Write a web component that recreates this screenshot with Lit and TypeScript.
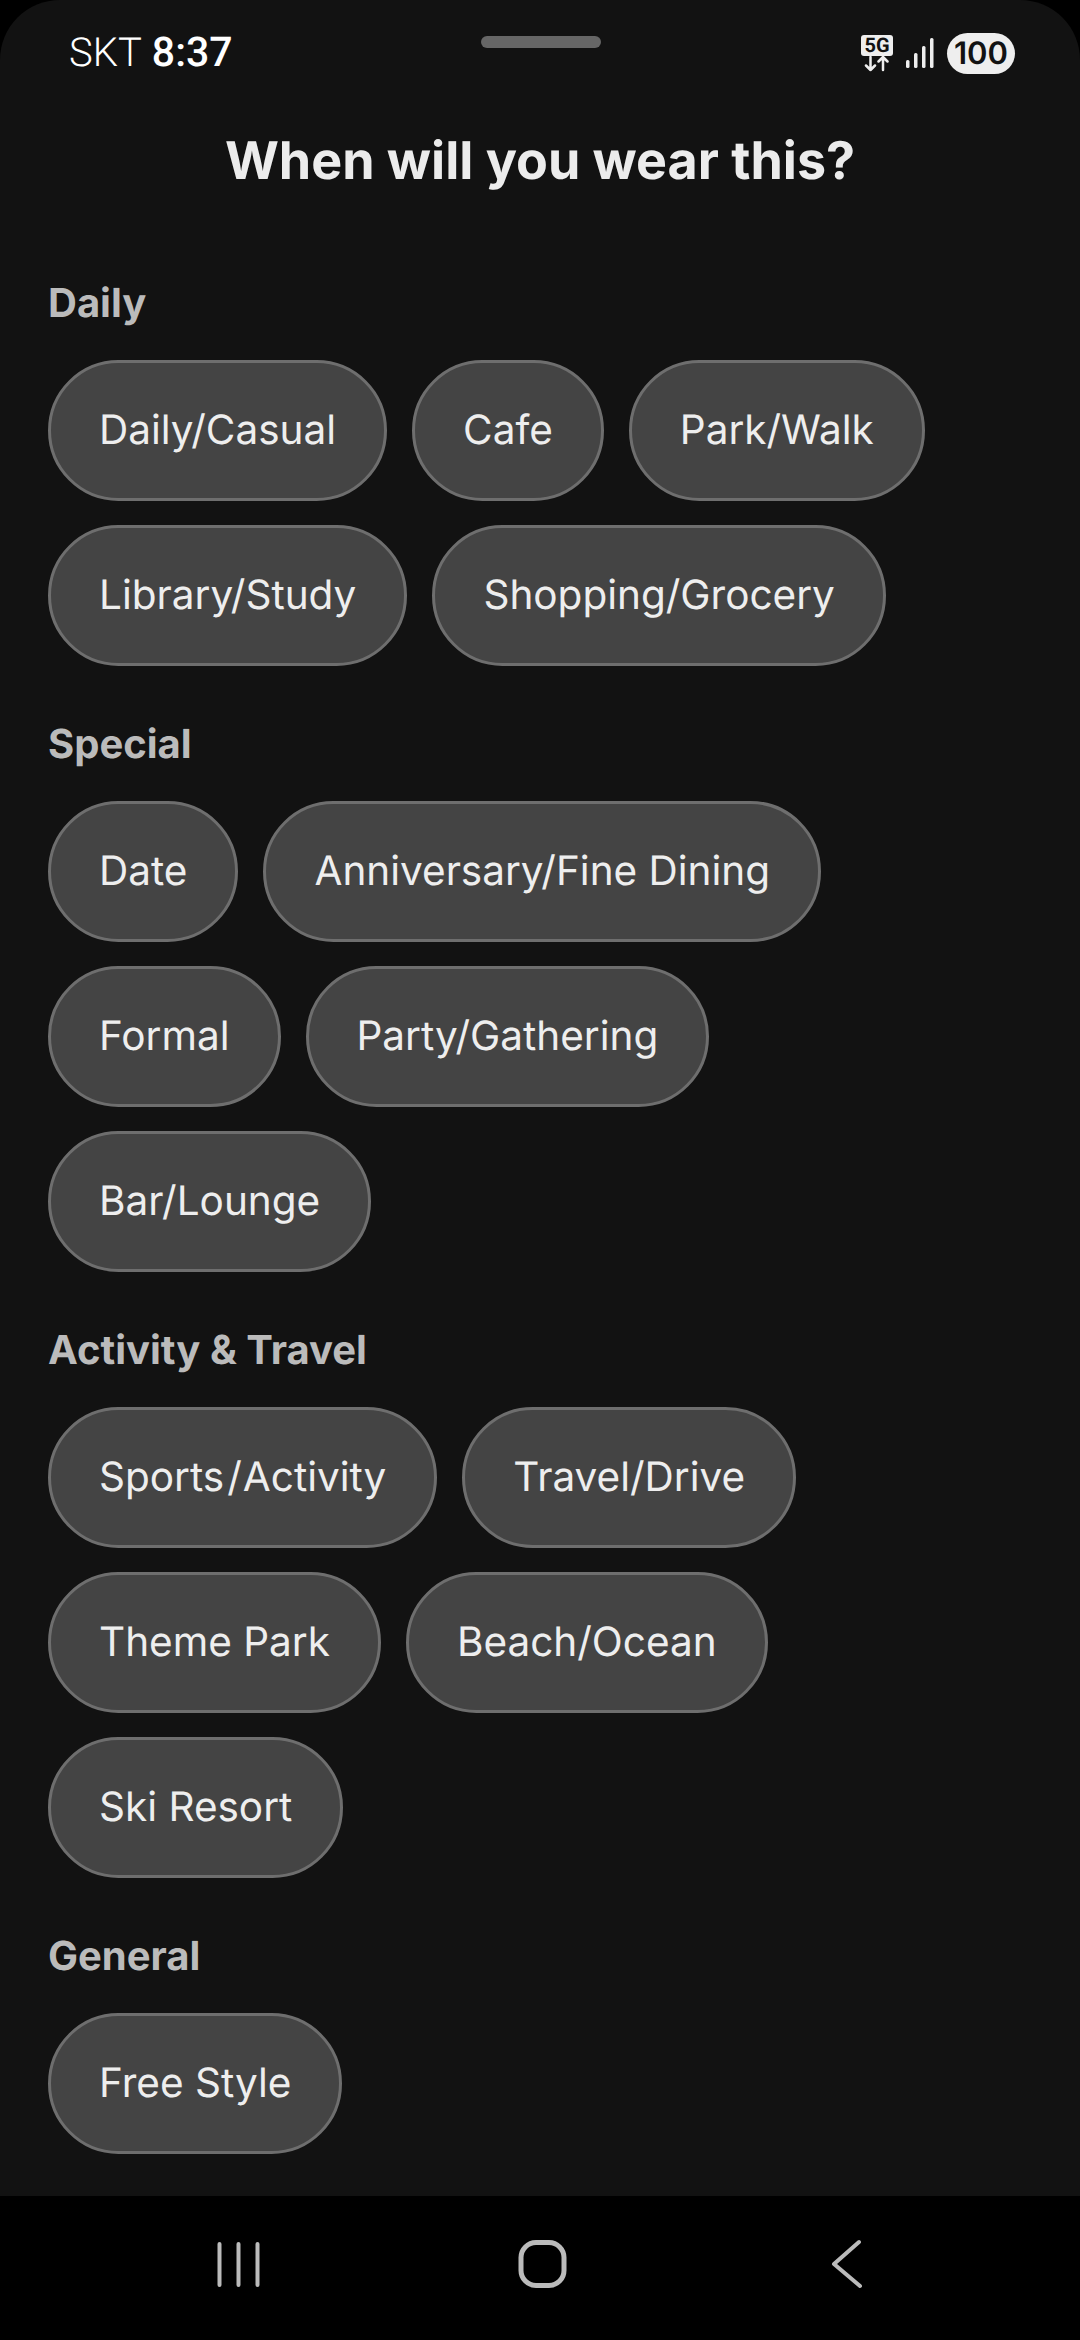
import { css, html, LitElement } from 'lit'
import { customElement } from 'lit/decorators.js'

interface Section {
  title: string
  chips: string[]
}

const sections: Section[] = [
  {
    title: 'Daily',
    chips: ['Daily/Casual', 'Cafe', 'Park/Walk', 'Library/Study', 'Shopping/Grocery'],
  },
  {
    title: 'Special',
    chips: ['Date', 'Anniversary/Fine Dining', 'Formal', 'Party/Gathering', 'Bar/Lounge'],
  },
  {
    title: 'Activity & Travel',
    chips: ['Sports/Activity', 'Travel/Drive', 'Theme Park', 'Beach/Ocean', 'Ski Resort'],
  },
  {
    title: 'General',
    chips: ['Free Style'],
  },
]

@customElement('app-root')
export class AppRoot extends LitElement {
  static styles = css`
    :host {
      display: flex;
      flex-direction: column;
      width: 1080px;
      height: 2340px;
      background: #000;
      font-family: Inter, 'Liberation Sans', sans-serif;
      text-rendering: geometricPrecision;
      overflow: hidden;
    }
    .screen {
      flex: 1;
      min-height: 0;
      background: #121212;
      border-radius: 60px 60px 0 0;
      position: relative;
      display: flex;
      flex-direction: column;
    }
    .status {
      height: 106px;
      flex: none;
      display: flex;
      align-items: center;
      justify-content: space-between;
      padding: 0 65px 0 69px;
      box-sizing: border-box;
    }
    .clock {
      display: flex;
      align-items: baseline;
      gap: 10px;
      color: #fff;
      font-size: 40px;
      font-family: Roboto, sans-serif;
    }
    .clock b {
      font-size: 41px;
      font-weight: 500;
    }
    .carrier {
      font-weight: 300;
    }
    .handle {
      position: absolute;
      top: 36px;
      left: 481px;
      width: 120px;
      height: 12px;
      border-radius: 6px;
      background: #666;
    }
    .indicators {
      display: flex;
      align-items: center;
      gap: 13px;
    }
    .indicators svg {
      display: block;
    }
    .net {
      width: 32px;
      height: 37px;
    }
    .five-g {
      background: #eee;
      color: #121212;
      border-radius: 3px;
      width: 32px;
      height: 21px;
      font-size: 20px;
      font-weight: 700;
      line-height: 21px;
      text-align: center;
      font-family: Roboto, sans-serif;
    }
    .battery {
      width: 68px;
      height: 41px;
      border-radius: 21px;
      background: #eee;
      color: #121212;
      font-size: 31px;
      font-weight: 600;
      line-height: 41px;
      text-align: center;
    }
    h1 {
      margin: 0;
      height: 110px;
      line-height: 110px;
      text-align: center;
      font-size: 52px;
      font-weight: 700;
      color: #ececec;
    }
    main {
      flex: 1;
      padding: 63px 48px 0;
      display: flex;
      flex-direction: column;
      gap: 54px;
    }
    h2 {
      margin: 0 0 33px;
      height: 48px;
      line-height: 48px;
      font-size: 40px;
      font-weight: 700;
      color: #bbb;
    }
    .chips {
      display: flex;
      flex-wrap: wrap;
      gap: 24px 25px;
    }
    .chip {
      box-sizing: border-box;
      height: 141px;
      padding: 0 48px 2px;
      display: flex;
      align-items: center;
      border: 3px solid #6e6e6e;
      border-radius: 71px;
      background: #444;
      color: #eee;
      font-size: 40.5px;
      white-space: pre;
    }
    /* the slash before a capital A sits tighter here than in the reference */
    .slash {
      margin: 0 1px 0 3px;
    }
    nav {
      flex: none;
      height: 144px;
      background: #000;
    }
    nav svg {
      display: block;
    }
  `

  renderLabel(label: string) {
    const i = label.indexOf('/A')
    if (i < 0) return label
    return html`<span>${label.slice(0, i)}<span class="slash">/</span>${label.slice(i + 1)}</span>`
  }

  render() {
    return html`
      <div class="screen">
        <div class="handle"></div>
        <div class="status">
          <div class="clock"><span class="carrier">SKT</span><b>8:37</b></div>
          <div class="indicators">
            <div class="net">
              <div class="five-g">5G</div>
              <svg width="32" height="16" viewBox="0 0 32 16" fill="none" stroke="#eee" stroke-width="2.5" stroke-linecap="round" stroke-linejoin="round">
                <path d="M9.500 1v13M5 9.500l4.500 4.500 4.500-4.500M22 14V1M17.500 5.500L22 1l4.500 4.500" />
              </svg>
            </div>
            <svg width="28" height="30" viewBox="0 0 28 30" fill="#eee">
              <rect x="0" y="22" width="3.500" height="8" rx="1.500" />
              <rect x="8" y="15" width="3.500" height="15" rx="1.500" />
              <rect x="16" y="8" width="3.500" height="22" rx="1.500" />
              <rect x="24" y="0" width="3.500" height="30" rx="1.500" />
            </svg>
            <div class="battery">100</div>
          </div>
        </div>
        <h1>When will you wear this?</h1>
        <main>
          ${sections.map(
            (s) => html`<section>
              <h2>${s.title}</h2>
              <div class="chips">${s.chips.map((c) => html`<div class="chip">${this.renderLabel(c)}</div>`)}</div>
            </section>`
          )}
        </main>
      </div>
      <nav>
        <svg width="1080" height="144" viewBox="0 0 1080 144" fill="none" stroke="#bbb" stroke-linecap="round" stroke-linejoin="round" stroke-width="4">
          <path d="M219.500 48v41M238.500 48v41M257.500 48v41" />
          <rect x="521" y="46.500" width="43" height="43" rx="15" stroke-width="5" />
          <path d="M859 46L834 68l26 22" />
        </svg>
      </nav>
    `
  }
}
